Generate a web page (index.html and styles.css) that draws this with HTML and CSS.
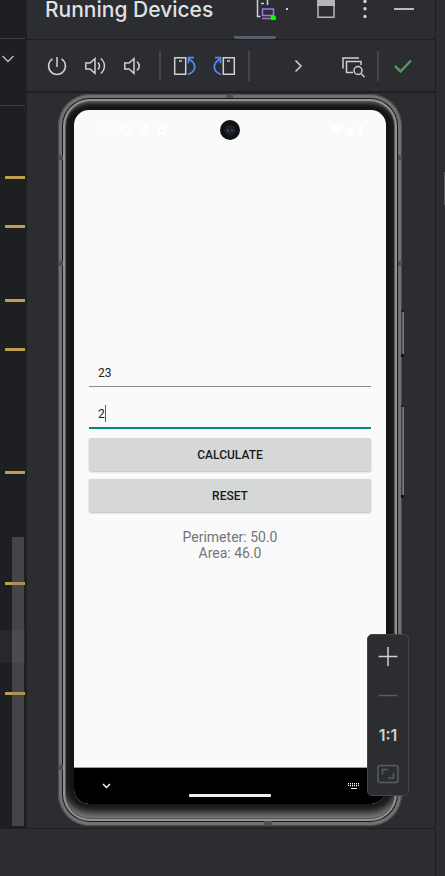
FILE: index.html
```html
<!DOCTYPE html>
<html lang="en">
<head>
<meta charset="utf-8">
<meta name="viewport" content="width=device-width, initial-scale=1">
<title>Running Devices</title>
<link rel="stylesheet" href="styles.css">
</head>
<body>
<div class="ide">
  <aside class="editor">
    <div class="editor-tabs"></div>
    <div class="editor-bar">
      <button class="icon-button" aria-label="Expand"><svg width="14" height="8" viewBox="0 0 14 8"><path d="M1.500 1l5.500 5.500L12.500 1" fill="none" stroke="#b4b8bf" stroke-width="1.500"/></svg></button>
    </div>
    <div class="stripe">
      <div class="current-line"></div>
      <i class="mark" style="top:70px"></i>
      <i class="mark" style="top:119px"></i>
      <i class="mark" style="top:193px"></i>
      <i class="mark" style="top:242px"></i>
      <i class="mark" style="top:365px"></i>
      <i class="mark" style="top:476px"></i>
      <i class="mark" style="top:586px"></i>
      <div class="scroll-thumb"></div>
    </div>
  </aside>

  <main class="panel">
    <header class="header">
      <h1 class="title">Running Devices</h1>
      <button class="tab" aria-label="Device tab">
        <svg width="22" height="24" viewBox="0 0 22 24"><g fill="none" stroke="#ced0d6" stroke-width="1.500"><path d="M4.500 20.500H1.500V2h10v7"/><path d="M5 7.500h3"/></g><rect x="6.500" y="13" width="11" height="6.500" fill="none" stroke="#a571e6" stroke-width="1.500"/><path d="M6 22.500h8" stroke="#a571e6" stroke-width="1.500"/><circle cx="17.200" cy="22" r="2.800" fill="#0f0"/></svg>
      </button>
      <span class="dot"></span>
      <button class="icon-button window" aria-label="Window"><svg width="18" height="20" viewBox="0 0 18 20"><path d="M1 0v17.200h16V0" fill="none" stroke="#b4b5b8" stroke-width="1.500"/><path d="M0 0h18v6H0z" fill="#b4b5b8"/></svg></button>
      <button class="icon-button more" aria-label="More"><svg width="4" height="20" viewBox="0 0 4 20"><g fill="#ced0d6"><circle cx="2" cy="1.500" r="1.700"/><circle cx="2" cy="8.800" r="1.700"/><circle cx="2" cy="16.500" r="1.700"/></g></svg></button>
      <button class="icon-button hide" aria-label="Hide"><svg width="20" height="20" viewBox="0 0 20 20"><path d="M0 9h20" stroke="#b9bbbf" stroke-width="2"/></svg></button>
    </header>

    <div class="toolbar">
      <div class="group">
        <button class="icon-button" aria-label="Power"><svg width="24" height="24" viewBox="0 0 24 24"><g fill="none" stroke="#ced0d6" stroke-width="1.500"><path d="M12 3v10"/><path d="M7.500 4.900a8.400 8.400 0 1 0 9 0"/></g></svg></button>
        <button class="icon-button" aria-label="Volume up"><svg width="24" height="24" viewBox="0 0 24 24"><g fill="none" stroke="#ced0d6" stroke-width="1.500"><path d="M2.800 9v6H7l5 4.300V4.700L7 9z"/><path d="M15 8.500q3 3.500 0 7M17.700 4.500c5 4 5 11 0 15"/></g></svg></button>
        <button class="icon-button" aria-label="Volume down"><svg width="24" height="24" viewBox="0 0 24 24"><g fill="none" stroke="#ced0d6" stroke-width="1.500"><path d="M3.800 9v6H8l5 4.300V4.700L8 9z"/><path d="M16 7.500q4.500 4.500 0 9"/></g></svg></button>
      </div>
      <span class="separator"></span>
      <div class="group rotate">
        <button class="icon-button" aria-label="Rotate left"><svg width="24" height="24" viewBox="0 0 24 24"><path d="M1.700 3.700h11v16.500h-11zM6 7h3" fill="none" stroke="#ced0d6" stroke-width="1.500"/><path d="M15 20.500c8.500-3 9-11 1-15.500M21 3.700h-5.500v5.500" fill="none" stroke="#548af7" stroke-width="1.700"/></svg></button>
        <button class="icon-button" aria-label="Rotate right"><svg width="24" height="24" viewBox="0 0 24 24"><path d="M11.300 3.700h11v16.500h-11zM15 7h3" fill="none" stroke="#ced0d6" stroke-width="1.500"/><path d="M9 20.500c-8.500-3-9-11-1-15.500M3 3.700h5.500v5.500" fill="none" stroke="#548af7" stroke-width="1.700"/></svg></button>
      </div>
      <span class="separator"></span>
      <button class="icon-button overflow" aria-label="More actions"><svg width="24" height="24" viewBox="0 0 24 24"><path d="M9.500 6.500l5.500 5.500-5.500 5.500" fill="none" stroke="#ced0d6" stroke-width="1.500"/></svg></button>
      <button class="icon-button inspect" aria-label="Inspect layout"><svg width="24" height="24" viewBox="0 0 24 24"><g fill="none" stroke="#ced0d6" stroke-width="1.500"><path d="M2 14.500V4h16"/><path d="M20 11V7.500H5.500v11H12"/><circle cx="17" cy="16.500" r="4"/><path d="M20 19.500l3.500 3.500"/></g></svg></button>
      <span class="separator"></span>
      <button class="icon-button" aria-label="Done"><svg width="24" height="24" viewBox="0 0 24 24"><path d="M4 12l5.500 5.500L20 6.500" fill="none" stroke="#57965c" stroke-width="2.500"/></svg></button>
    </div>

    <section class="stage">
      <div class="phone">
        <i class="key key-power"></i><i class="key key-volume"></i>
        <i class="band band-left band-high"></i><i class="band band-left band-mid"></i><i class="band band-left band-low"></i>
        <i class="band band-right band-high"></i><i class="band band-right band-mid"></i>
        <i class="band band-top"></i><i class="band band-bottom"></i>
        <div class="bezel">
          <div class="screen">
            <div class="status">
              <span>6:30</span>
              <svg width="9" height="10" viewBox="0 0 9 10"><path d="M4.500 0L9 2v3c0 2.500-2 4-4.500 5C2 9 0 7.500 0 5V2z" fill="#fff"/><path d="M3 3l3 2-3 2z" fill="#f3f3f3"/></svg>
              <svg class="sd" width="8" height="10" viewBox="0 0 8 10"><path d="M3 0h5v10H0V3z" fill="#fff"/></svg>
              <svg class="app-badge" width="8" height="10" viewBox="0 0 8 10"><path d="M0 1h8v9H0z" fill="#fff"/><path d="M3 4h2v3H3z" fill="#f3f3f3"/></svg>
              <svg class="signals" width="34" height="10" viewBox="0 0 34 10"><path d="M0 2q6-4 12 0L6 10zM22 0v10H13zM28 1h1V0h2v1h1v9h-5V1z" fill="#fff"/></svg>
            </div>
            <svg class="camera" width="20" height="20" viewBox="0 0 20 20"><circle cx="10" cy="10" r="10" fill="#101112"/><circle cx="10" cy="10" r="5.500" fill="#202124"/><circle cx="8" cy="10.500" r="1" fill="#45656c"/><circle cx="12" cy="10.500" r="1" fill="#37518a"/></svg>
            <form class="form" onsubmit="return false">
              <div class="field"><input type="text" inputmode="decimal" aria-label="Length" value="23"></div>
              <div class="field active"><input type="text" inputmode="decimal" aria-label="Width" value="2"><i class="caret"></i></div>
              <button class="action" type="submit">CALCULATE</button>
              <button class="action" type="reset">RESET</button>
              <output class="result">Perimeter: 50.0<br>Area: 46.0</output>
            </form>
            <nav class="nav">
              <button class="icon-button" aria-label="Hide keyboard"><svg width="9" height="6" viewBox="0 0 9 6"><path d="M1 1l3.500 3.500L8 1" fill="none" stroke="#fff" stroke-width="1.300"/></svg></button>
              <span class="home"></span>
              <button class="icon-button" aria-label="Keyboard"><svg width="12" height="8" viewBox="0 0 12 8"><path d="M0 1.500h12M0 3.500h12" stroke="#fff" stroke-dasharray="1 1"/><path d="M0 2.500h12M2 4.500h8" stroke="#fff" stroke-opacity=".4" stroke-dasharray="1 1"/><path d="M3 6.500h6" stroke="#fff"/></svg></button>
            </nav>
          </div>
        </div>
      </div>
      <div class="zoom">
        <button class="icon-button" aria-label="Zoom in"><svg width="20" height="20" viewBox="0 0 20 20"><path d="M10 0v19M.5 9.500h19" stroke="#ced0d6" stroke-width="1.500"/></svg></button>
        <button class="icon-button" aria-label="Zoom out"><svg width="20" height="20" viewBox="0 0 20 20"><path d="M.5 9.500h19" stroke="#5a5d63" stroke-width="1.500"/></svg></button>
        <button class="icon-button ratio">1:1</button>
        <button class="icon-button" aria-label="Fit to screen"><svg width="22" height="20" viewBox="0 0 22 20"><rect x="1" y="1.500" width="20" height="17" rx="2" fill="none" stroke="#5a5d63" stroke-width="1.500"/><path d="M5.500 10.500v-5h6M16.500 9v5h-5.500" fill="none" stroke="#5a5d63" stroke-width="1.500"/></svg></button>
      </div>
    </section>
  </main>

  <aside class="side"><i class="side-thumb"></i></aside>
  <footer class="footer"></footer>
</div>
</body>
</html>
```

FILE: styles.css
```css
* { box-sizing: border-box; }

body {
  margin: 0;
  background: #2b2d30;
  color: #dfe1e5;
  font-family: Inter, "Liberation Sans", sans-serif;
}

button { font: inherit; color: inherit; }
svg { display: block; flex: none; }

.ide {
  display: grid;
  grid-template-columns: 27px 1fr 10px;
  grid-template-rows: 1fr 47px;
  min-height: 100vh;
}

.icon-button {
  display: flex;
  align-items: center;
  justify-content: center;
  padding: 0;
  border: 0;
  background: none;
}

/* editor edge */
.editor {
  display: flex;
  flex-direction: column;
  background: #1e1f22;
  border-right: 2px solid #1f2023;
}
.editor-tabs { height: 39px; border-bottom: 1px solid #393b40; }
.editor-bar { height: 67px; padding: 16px 0 0 1px; border-bottom: 1px solid #393b40; }
.stripe { position: relative; flex: 1; }
.current-line { position: absolute; top: 524px; left: 0; right: 0; height: 33px; background: #26282e; }
.mark { position: absolute; left: 5px; right: 0; height: 3px; background: #c29e4a; }
.scroll-thumb { position: absolute; top: 431px; right: 1px; bottom: 3px; width: 12px; background: rgba(128, 128, 128, 0.4); }

/* tool window */
.panel { display: flex; flex-direction: column; min-width: 0; }
.header {
  display: flex;
  align-items: flex-start;
  height: 40px;
  padding: 0 21px 0 18px;
  border-bottom: 1px solid #1e1f22;
}
.title { margin: 0; font-size: 21px; line-height: 20px; font-weight: 500; white-space: nowrap; }
.tab {
  display: flex;
  align-items: flex-start;
  width: 42px;
  height: 39px;
  margin-left: auto;
  padding: 0 0 0 22px;
  border: 0;
  border-radius: 2px;
  background: linear-gradient(#5a5d6b, #5a5d6b) bottom / 100% 3px no-repeat;
}
.tab svg { margin-top: -4px; }
.dot { width: 2px; height: 2px; margin: 8px 29px 0 10px; background: #ced0d6; }
.more { margin-left: 28px; }
.hide { margin-left: 27px; }

.toolbar {
  display: flex;
  align-items: center;
  gap: 12px;
  height: 53px;
  padding: 0 20px 0 18px;
  border-bottom: 2px solid #1e1f22;
}
.group { display: flex; gap: 14px; margin-right: 2px; }
.rotate { gap: 15px; margin-right: 0; }
.separator { width: 2px; height: 30px; background: #43454a; }
.overflow { margin-left: auto; }
.inspect { margin-left: 19px; }

/* device */
.stage {
  position: relative;
  display: flex;
  flex: 1;
  padding: 1px 33px 2px 31px;
  border-bottom: 1px solid #1e1f22;
}
.phone {
  position: relative;
  display: flex;
  flex: 1;
  padding: 4px;
  border-radius: 32px;
  background: #717171;
  box-shadow: inset 0 0 0 1px #4a4b4c;
}
.bezel {
  display: flex;
  flex: 1;
  padding: 12px 12px 18px;
  border-radius: 28px;
  background: #151515;
  box-shadow: inset 0 0 0 1px #181818, inset 0 0 0 3px #929292, inset 0 0 0 4px #555, inset 0 5px 4px 0 #666, inset 0 -10px 8px -1px #848484;
}
.screen {
  position: relative;
  display: flex;
  flex: 1;
  flex-direction: column;
  overflow: hidden;
  border-radius: 15px;
  background: #fafafa;
  font-family: Roboto, sans-serif;
}
.band { position: absolute; width: 4px; height: 5px; background: #505050; }
.band-left { left: 1px; }
.band-right { right: 0; }
.band-high { top: 61px; }
.band-mid { top: 167px; }
.band-low { bottom: 56px; }
.band-top { top: 0; left: 168px; width: 7px; height: 4px; }
.band-bottom { bottom: 0; left: 206px; width: 8px; }
.key {
  position: absolute;
  right: -2px;
  width: 3px;
  background: linear-gradient(90deg, #333, #888);
  border-top: 2px solid #222;
  border-bottom: 3px solid #111;
}
.key-power { top: 216px; height: 47px; }
.key-volume { top: 311px; height: 93px; }

.status {
  display: flex;
  align-items: center;
  height: 40px;
  padding: 0 21px 0 23px;
  color: #fff;
  font-size: 11px;
}
.status span { margin-right: 4px; }
.sd, .app-badge { margin-left: 9px; }
.signals { margin-left: auto; }
.camera { position: absolute; top: 10px; left: 50%; margin-left: -10px; }

.form {
  display: flex;
  flex: 1;
  flex-direction: column;
  padding: 196px 15px 0;
}
.field { position: relative; height: 41px; border-bottom: 1px solid #8b8b8b; }
.field.active { height: 42px; border-bottom: 2px solid #00897b; margin-bottom: 9px; }
.field input {
  width: 100%;
  height: 100%;
  padding: 14px 9px 0;
  border: 0;
  outline: 0;
  background: none;
  color: #222;
  font: 12px/16px Roboto, sans-serif;
}
.caret { position: absolute; top: 18px; left: 16px; width: 1px; height: 17px; background: #00897b; }
.action {
  height: 33px;
  margin-bottom: 8px;
  padding: 0;
  border: 0;
  border-radius: 2px;
  background: #d6d8d7;
  box-shadow: 0 1px 2px rgba(0, 0, 0, 0.25);
  color: #1a1a1a;
  font-size: 12px;
  font-weight: 500;
}
.result { display: block; margin-top: 9px; text-align: center; color: #757575; font-size: 14px; line-height: 16px; }

.nav {
  display: flex;
  align-items: center;
  justify-content: space-between;
  height: 37px;
  padding: 0 26px 0 28px;
  border-top: 1px solid #9ba09e;
  background: #000;
}
.home { align-self: flex-end; width: 82px; height: 3px; margin-bottom: 7px; border-radius: 1px; background: #eee; }

/* zoom controls */
.zoom {
  position: absolute;
  right: 26px;
  bottom: 32px;
  display: flex;
  flex-direction: column;
  justify-content: space-between;
  width: 42px;
  padding: 12px 0 11px;
  gap: 19px;
  border: 1px solid #434548;
  border-radius: 5px;
  background: #2b2d30;
}
.ratio { height: 20px; font-size: 16px; font-weight: 600; color: #ced0d6; }

.side { position: relative; grid-row: 1 / 3; grid-column: 3; border-left: 1px solid #1e1f22; }
.side-thumb { position: absolute; top: 172px; right: 0; width: 1px; height: 33px; background: #5a5c60; }
.footer { grid-row: 2; grid-column: 1 / 3; background: #2b2d30; }
```
